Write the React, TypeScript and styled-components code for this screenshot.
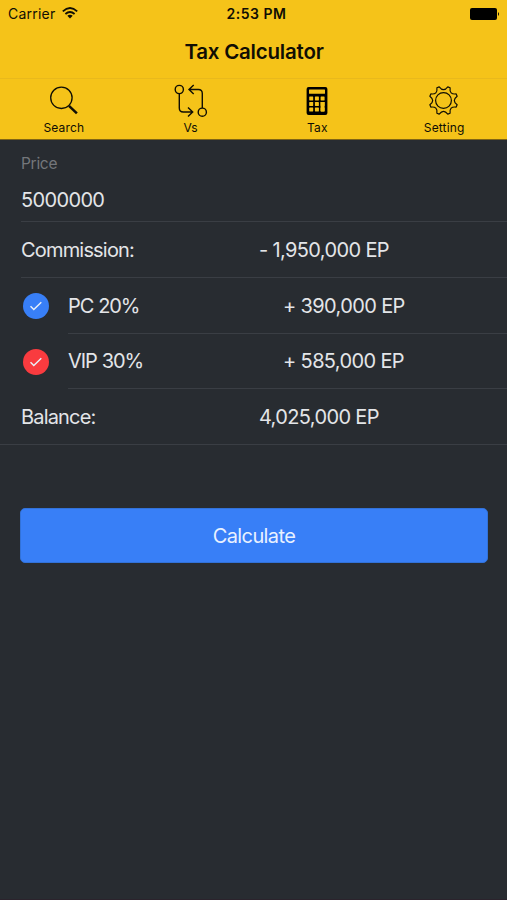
import React from "react";
import styled, { createGlobalStyle } from "styled-components";

const GlobalStyle = createGlobalStyle`
  * { box-sizing: border-box; }
  body { margin: 0; background: #282c31; }
`;

const Screen = styled.main`
  width: 507px;
  height: 900px;
  display: flex;
  flex-direction: column;
  overflow: hidden;
  background: #282c31;
  border-bottom: 1px solid #2b232c;
  color: #e3e5e8;
  font-family: Inter, "Liberation Sans", sans-serif;
  font-size: 20px;
  white-space: nowrap;
`;

const Header = styled.header`
  height: 140px;
  background: #f5c319;
  border-bottom: 1px solid #806514;
  color: #100e04;
`;

const StatusBar = styled.div`
  height: 27px;
  padding: 0 7px 0 8px;
  display: grid;
  grid-template-columns: 1fr auto 1fr;
  align-items: center;
  font-size: 14px;
  line-height: 27px;
`;

const Carrier = styled.div`
  display: flex;
  align-items: center;
  gap: 7px;
  letter-spacing: 0.22px;
  svg { margin-top: -2px; }
`;

const Clock = styled.div`
  font-size: 14px;
  font-weight: 600;
  letter-spacing: 0.5px;
  padding-left: 5px;
`;

const BatterySlot = styled.div`
  display: flex;
  justify-content: flex-end;
`;

const Title = styled.h1`
  margin: 0;
  height: 51px;
  padding-left: 1px;
  font-size: 20.5px;
  font-weight: 600;
  line-height: 50px;
  letter-spacing: -0.21px;
  text-align: center;
`;

const Tabs = styled.nav`
  height: 61px;
  display: grid;
  grid-template-columns: repeat(4, 1fr);
  border-top: 1px solid #e9b91c;
`;

const Tab = styled.div`
  display: flex;
  flex-direction: column;
  align-items: center;
  padding: 3px 0 0 1px;
  font-size: 12px;
  line-height: 15px;
  letter-spacing: 0.15px;
  svg { display: block; margin-bottom: 2px; }
`;

const Price = styled.div`
  height: 82px;
  margin-left: 21px;
  padding-top: 14px;
  border-bottom: 1px solid #3a3e44;
`;

const Label = styled.div`
  color: #74777b;
  font-size: 15.5px;
  line-height: 20px;
  letter-spacing: -0.3px;
`;

const Amount = styled.div`
  margin-top: 14px;
  line-height: 24px;
  letter-spacing: -0.65px;
`;

const TotalRow = styled.div<{ $fullRule?: boolean }>`
  height: 56px;
  margin-left: ${(p) => (p.$fullRule ? 0 : 21)}px;
  padding-left: ${(p) => (p.$fullRule ? 21 : 0)}px;
  display: grid;
  grid-template-columns: 238px 1fr;
  align-items: center;
  border-bottom: 1px solid #3a3e44;
`;

const Option = styled.div<{ $height: number }>`
  height: ${(p) => p.$height}px;
  display: grid;
  grid-template-columns: 45px 1fr;
  padding-left: 23px;
  align-items: center;
`;

const OptionRow = styled.div`
  height: 100%;
  display: grid;
  grid-template-columns: 215px 1fr;
  align-items: center;
  border-bottom: 1px solid #3a3e44;
`;

const Name = styled.span<{ $tight?: boolean }>`
  letter-spacing: ${(p) => (p.$tight ? -1.1 : -0.82)}px;
  word-spacing: ${(p) => (p.$tight ? 0.5 : 0)}px;
`;

const Value = styled.span`
  letter-spacing: -0.63px;
`;

const Check = styled.span<{ $color: string }>`
  width: 26px;
  height: 26px;
  border-radius: 50%;
  display: grid;
  place-items: center;
  background: ${(p) => p.$color};
`;

const CalculateButton = styled.button`
  height: 55px;
  margin: 63px 19px 0 20px;
  border: 1px solid #3272d8;
  border-radius: 5px;
  background: #387ff7;
  color: #e8f1ff;
  font: inherit;
  letter-spacing: -0.62px;
`;

const Tick = () => (
  <svg width="13" height="10" viewBox="0 0 13 10" fill="none" stroke="#e9f0f8" strokeWidth="1.5">
    <path d="M.5 5.2 3.8 8.5 11.3 1.2" />
  </svg>
);

const Wifi = () => (
  <svg width="16" height="12" viewBox="0 0 16 12" fill="none" stroke="currentColor" strokeWidth="1.8">
    <path d="M.8 4.3Q8-2.2 15.2 4.3M3.4 7Q8 2.9 12.6 7" />
    <path d="M5.3 8.8Q8 6.6 10.7 8.8L8 11.5Z" fill="currentColor" stroke="none" />
  </svg>
);

const Battery = () => (
  <svg width="31" height="12" viewBox="0 0 31 12" fill="#000">
    <rect x="1" width="27" height="12" rx="2" />
    <path d="M29 4q2 2 0 4z" />
  </svg>
);

const SearchIcon = () => (
  <svg width="36" height="36" viewBox="0 0 36 36" fill="none" stroke="currentColor">
    <circle cx="15.4" cy="15.8" r="10.7" strokeWidth="1.3" />
    <path d="m23 23.8 7.9 7.6" strokeWidth="2.5" />
  </svg>
);

const CompareIcon = () => (
  <svg width="36" height="36" viewBox="0 0 36 36" fill="none" stroke="currentColor" strokeWidth="1.4">
    <circle cx="6.3" cy="7.5" r="4.1" />
    <circle cx="29.3" cy="30.2" r="4.1" />
    <path d="M6.3 11.6V26q0 4 4 4h9M15 25.6l4.7 4.5L15 34.6M29.3 26V11.5q0-4-4-4H16M20.7 3 16 7.5l4.7 4.6" />
  </svg>
);

const CalculatorIcon = () => (
  <svg width="36" height="36" viewBox="0 0 36 36">
    <rect x="7.6" y="5" width="20.8" height="28" rx="2" />
    <g fill="#f5c319">
      <rect x="10" y="7.5" width="16" height="4.3" rx=".5" />
      {[14.6, 20.1, 25.6].map((y) =>
        [10.2, 15.9, 21.6].map((x) => <rect key={`${x}-${y}`} x={x} y={y} width="4" height="3.8" rx=".4" />)
      )}
      <rect x="21.6" y="20.1" width="4" height="9.3" rx=".4" />
    </g>
  </svg>
);

const toothPath = Array.from({ length: 8 }, (_, i) => {
  const at = (radius: number, degrees: number) => {
    const a = ((degrees + 22.5 + i * 45) * Math.PI) / 180;
    return `${(17.5 + radius * Math.cos(a)).toFixed(2)} ${(18.5 + radius * Math.sin(a)).toFixed(2)}`;
  };
  return `${i ? "L" : "M"}${at(14.3, -5)}L${at(14.3, 5)}Q${at(8, 22.5)} ${at(14.3, 40)}`;
}).join("");

const GearIcon = () => (
  <svg width="36" height="36" viewBox="0 0 36 36" fill="none" stroke="currentColor" strokeWidth="1.2" strokeLinejoin="round">
    <path d={`${toothPath}Z`} />
    <circle cx="17.5" cy="18.5" r="7.9" />
  </svg>
);

const tabs = [
  { label: "Search", Icon: SearchIcon },
  { label: "Vs", Icon: CompareIcon },
  { label: "Tax", Icon: CalculatorIcon },
  { label: "Setting", Icon: GearIcon },
];

const options = [
  { name: "PC 20%", value: "+ 390,000 EP", color: "#387ff7", height: 56 },
  { name: "VIP 30%", value: "+ 585,000 EP", color: "#f93b3f", height: 55 },
];

export default function App() {
  return (
    <Screen>
      <GlobalStyle />
      <Header>
        <StatusBar>
          <Carrier>Carrier <Wifi /></Carrier>
          <Clock>2:53 PM</Clock>
          <BatterySlot><Battery /></BatterySlot>
        </StatusBar>
        <Title>Tax Calculator</Title>
        <Tabs>
          {tabs.map(({ label, Icon }) => (
            <Tab key={label}><Icon />{label}</Tab>
          ))}
        </Tabs>
      </Header>
      <Price>
        <Label>Price</Label>
        <Amount>5000000</Amount>
      </Price>
      <TotalRow>
        <Name>Commission:</Name>
        <Value>- 1,950,000 EP</Value>
      </TotalRow>
      {options.map(({ name, value, color, height }) => (
        <Option key={name} $height={height}>
          <Check $color={color}><Tick /></Check>
          <OptionRow>
            <Name $tight>{name}</Name>
            <Value>{value}</Value>
          </OptionRow>
        </Option>
      ))}
      <TotalRow $fullRule>
        <Name>Balance:</Name>
        <Value>4,025,000 EP</Value>
      </TotalRow>
      <CalculateButton>Calculate</CalculateButton>
    </Screen>
  );
}
